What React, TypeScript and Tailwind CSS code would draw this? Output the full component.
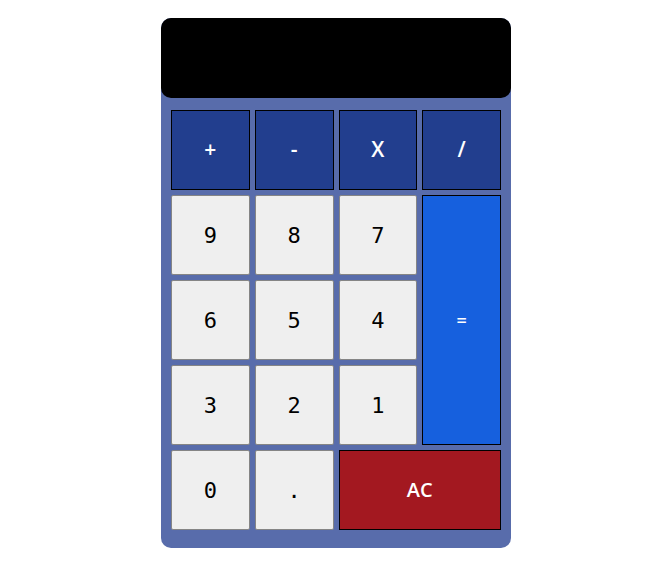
import { FC } from "react";

const digit =
  "bg-[#efefef] border border-[#858585] rounded-[2px] text-black text-[22px] font-['DejaVu_Sans_Mono',monospace]";
const op =
  "bg-[#223e8e] border border-black text-white text-[21px] font-semibold font-['Open_Sans',sans-serif]";

const App: FC = () => {
  const nums = ["9", "8", "7", "6", "5", "4", "3", "2", "1"];

  return (
    <div className="w-[668px] h-[568px] bg-white pt-[18px]">
      <div className="ml-[161px] w-[350px] bg-[#586cab] rounded-[10px] pb-[18px]">
        <div className="h-[80px] bg-black rounded-[10px]" />
        <div className="grid grid-cols-4 auto-rows-[80px] gap-[5px] px-[10px] pt-[12px]">
          <button className={op}>+</button>
          <button className={op}>-</button>
          <button className={op}>X</button>
          <button className={op}>/</button>
          {nums.slice(0, 3).map((n) => (
            <button key={n} className={digit}>
              {n}
            </button>
          ))}
          <button className="row-span-3 bg-[#1660de] border border-black text-white text-[18px] font-semibold font-['Open_Sans',sans-serif]">
            =
          </button>
          {nums.slice(3).map((n) => (
            <button key={n} className={digit}>
              {n}
            </button>
          ))}
          <button className={digit}>0</button>
          <button className={digit}>.</button>
          <button className="col-span-2 bg-[#a31820] border border-black text-white text-[20px] font-semibold font-['Open_Sans',sans-serif]">
            AC
          </button>
        </div>
      </div>
    </div>
  );
};

export default App;
